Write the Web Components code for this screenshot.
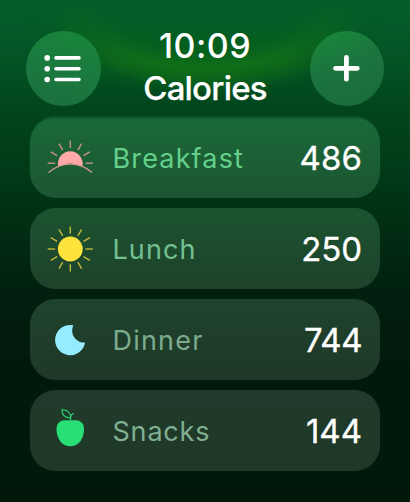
<!DOCTYPE html>
<html lang="en">
<head>
<meta charset="utf-8">
<title>Calories</title>
<style>
html,body{margin:0;width:410px;height:502px;overflow:hidden;background:#01190b}
</style>
</head>
<body>
<watch-screen>
  <watch-header slot="header" time="10:09" heading="Calories"></watch-header>
  <meal-row name="Breakfast" value="486" icon="sunrise" style="--bg:linear-gradient(rgba(26,106,56,.45),#1a6938 3px,#1c5532);--label:#64d08c;--ls:1.15px;--vs:.1px;--edge:0 -1px 2px rgba(26,106,56,.5)"></meal-row>
  <meal-row name="Lunch" value="250" icon="sun" style="--bg:linear-gradient(#1b5430,#1e412a);--label:#72c093;--ls:1.1px;--vs:-.1px"></meal-row>
  <meal-row name="Dinner" value="744" icon="moon" style="--bg:linear-gradient(#1e432c,#1f3828);--label:#7cac8e;--ls:1.2px;--vs:-.5px"></meal-row>
  <meal-row name="Snacks" value="144" icon="apple" style="--bg:linear-gradient(#203b2b,#1f3828);--label:#7fae92;--ls:.8px;--vs:0px"></meal-row>
</watch-screen>
<script>
class WatchScreen extends HTMLElement{
  constructor(){
    super();
    this.attachShadow({mode:'open'}).innerHTML=`
<style>
:host{display:block;position:relative;isolation:isolate;overflow:hidden;width:410px;height:502px;box-sizing:border-box;padding:31px 26px 0;color:#fff;
 font-family:Inter,"Liberation Sans",sans-serif;
 background:linear-gradient(#045e2a 0,#045a28 30px,#035022 72px,#02481e 100px,#02431c 120px,#013817 180px,#012a12 240px,#011e0e 300px,#01190c 370px,#01180b 502px)}
.glow{position:absolute;z-index:-1;inset:0 0 auto;height:130px;
 background:
  radial-gradient(ellipse 190px 112px at 205px -8px,transparent 36%,rgba(8,104,26,.3) 52%,rgba(18,114,24,.85) 68%,rgba(16,108,24,.7) 77%,rgba(8,88,28,.2) 89%,transparent 98%),
  radial-gradient(ellipse 170px 52px at 205px 42px,rgba(3,102,26,.75),rgba(3,102,26,.55) 50%,transparent);
 -webkit-mask:linear-gradient(transparent,rgba(0,0,0,.35) 25px,#000 62px);
 mask:linear-gradient(transparent,rgba(0,0,0,.35) 25px,#000 62px)}
.list{display:flex;flex-direction:column;gap:10px;padding:0 4px;margin-top:11px}
</style>
<div class="glow"></div><slot name="header"></slot><div class="list"><slot></slot></div>`;
  }
}
customElements.define('watch-screen',WatchScreen);

class RoundButton extends HTMLElement{
  connectedCallback(){
    this.attachShadow({mode:'open'}).innerHTML=`
<style>
:host{display:grid;place-items:center;width:74.5px;height:75px;border-radius:50%;background:var(--bg);flex:none}
::slotted(svg){display:block}
</style><slot></slot>`;
  }
}
customElements.define('round-button',RoundButton);

class WatchHeader extends HTMLElement{
  connectedCallback(){
    this.attachShadow({mode:'open'}).innerHTML=`
<style>
:host{display:flex;justify-content:space-between;height:75px}
.mid{display:flex;flex-direction:column;align-items:center;flex:1;text-align:center;white-space:nowrap}
.time{font-size:34px;line-height:42px;font-weight:500;letter-spacing:.5px;margin-top:-6px}
.title{font-size:33px;line-height:42px;font-weight:500;letter-spacing:-.8px;-webkit-text-stroke:.25px #fff}
.a{--bg:linear-gradient(195deg,#18853a 5%,#1a7b3e 45%,#1b6e3d)}
.b{--bg:linear-gradient(160deg,#18873a 5%,#1b743e 45%,#1a6c3b)}
</style>
<round-button class="a"><svg width="38" height="28" viewBox="0 0 38 28" fill="#fff" stroke="#fff" stroke-width="3.6" stroke-linecap="round"><g transform="translate(0 -.3)"><g stroke="none"><circle cx="3.2" cy="3.2" r="2.8"/><circle cx="3.2" cy="14" r="2.8"/><circle cx="3.2" cy="24.8" r="2.8"/></g><path d="M12 3.2H35M12 14H35M12 24.8H35"/></g></svg></round-button>
<div class="mid"><div class="time">${this.getAttribute('time')}</div><div class="title">${this.getAttribute('heading')}</div></div>
<round-button class="b"><svg width="28" height="28" viewBox="0 0 28 28" stroke="#fff" stroke-width="4.8" stroke-linecap="round"><path d="M2.5 13.3H24.3M13.4 2.5V24.2"/></svg></round-button>`;
  }
}
customElements.define('watch-header',WatchHeader);

const rays=(color,from,to)=>{
  let s='';
  for(let a=from;a<=to;a+=30)s+=`<path d="M39.2 24H46.6" transform="rotate(${a} 24 24)" stroke="${color}" stroke-width="1.4"/>`;
  return s;
};
const icons={
  sunrise:`<g transform="translate(0 5.2)">${rays('#c99284',180,360)}<path d="M11.9 27.2A12.4 12.4 0 1 1 36.1 27.2Q24 21.5 11.9 27.2Z" fill="#ffa9a9"/><path d="M2.2 33.2C15.5 22.2 32.5 22.2 45.8 33.2" fill="none" stroke="#d79a90" stroke-width="1.3"/></g>`,
  sun:`${rays('#c3b83a',0,330)}<circle cx="24" cy="24" r="12.4" fill="#ffe23c"/>`,
  moon:`<path d="M27.2 9.3A15.1 15.1 0 1 0 38.8 26.5C30.5 27.5 22.7 18.2 27.2 9.3Z" fill="#97ebff"/>`,
  apple:`<path d="M24 13.6C28.3 13.1 31.8 13.1 34.6 14.9C38.2 17.3 38.3 22.5 37 28C35 35 30.5 39.3 24 39.3C17.5 39.3 13 35 11 28C9.7 22.5 9.8 17.3 13.4 14.9C16.2 13.1 19.7 13.1 24 13.6Z" fill="#28df76"/><path d="M24.3 14.5V10.4Q24.4 7.5 27.3 6.4M24.3 11.1C18.5 11 15.6 7.8 15.7 2.9C20.5 2.4 24.2 5.2 24.3 11.1Z" fill="none" stroke="#28cc70" stroke-width="1.2"/>`
};
class MealIcon extends HTMLElement{
  connectedCallback(){
    this.attachShadow({mode:'open'}).innerHTML=`
<style>:host{display:block;width:48px;height:48px;flex:none}svg{display:block;overflow:visible}</style>
<svg width="48" height="48" viewBox="0 0 48 48"><g transform="translate(.3 0)">${icons[this.getAttribute('name')]}</g></svg>`;
  }
}
customElements.define('meal-icon',MealIcon);

class MealRow extends HTMLElement{
  connectedCallback(){
    this.attachShadow({mode:'open'}).innerHTML=`
<style>
:host{display:flex;align-items:center;box-sizing:border-box;width:350px;height:81px;padding:0 18px 0 16px;border-radius:26px;background:var(--bg);
 box-shadow:var(--edge,0 0 1px rgba(45,95,62,.6))}
.label{flex:1;margin-left:18.5px;padding-top:2px;font-size:27px;line-height:40px;color:var(--label);letter-spacing:var(--ls);font-weight:400}
.value{font-size:33px;line-height:40px;font-weight:400;letter-spacing:var(--vs);-webkit-text-stroke:.3px #fff}
</style>
<meal-icon name="${this.getAttribute('icon')}"></meal-icon>
<span class="label">${this.getAttribute('name')}</span>
<span class="value">${this.getAttribute('value')}</span>`;
  }
}
customElements.define('meal-row',MealRow);
</script>
</body>
</html>
